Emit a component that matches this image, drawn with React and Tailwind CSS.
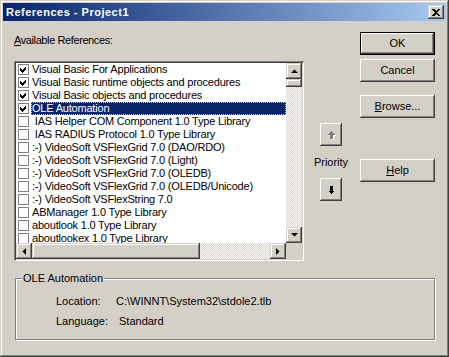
import React from 'react';

// win2000 bevels
const raised = 'shadow-[inset_-1px_-1px_#404040,inset_1px_1px_#fff,inset_-2px_-2px_#808080,inset_2px_2px_#d4d0c8]';
const raisedSb = 'shadow-[inset_-1px_-1px_#404040,inset_1px_1px_#d4d0c8,inset_-2px_-2px_#808080,inset_2px_2px_#fff]';
const sunken = 'shadow-[inset_1px_1px_#808080,inset_-1px_-1px_#fff,inset_2px_2px_#404040,inset_-2px_-2px_#d4d0c8]';
const dither = 'bg-[repeating-conic-gradient(#fff_0_25%,#d4d0c8_0_50%)] bg-[length:2px_2px]';

const refs = [
    { name: 'Visual Basic For Applications', on: true },
    { name: 'Visual Basic runtime objects and procedures', on: true },
    { name: 'Visual Basic objects and procedures', on: true },
    { name: 'OLE Automation', on: true, sel: true },
    { name: ' IAS Helper COM Component 1.0 Type Library' },
    { name: ' IAS RADIUS Protocol 1.0 Type Library' },
    { name: ':-) VideoSoft VSFlexGrid 7.0 (DAO/RDO)' },
    { name: ':-) VideoSoft VSFlexGrid 7.0 (Light)' },
    { name: ':-) VideoSoft VSFlexGrid 7.0 (OLEDB)' },
    { name: ':-) VideoSoft VSFlexGrid 7.0 (OLEDB/Unicode)' },
    { name: ':-) VideoSoft VSFlexString 7.0' },
    { name: 'ABManager 1.0 Type Library' },
    { name: 'aboutlook 1.0 Type Library' },
    { name: 'aboutlookex 1.0 Type Library' },
];

const Check = () => (
    <svg width="9" height="9" viewBox="0 0 9 9" shapeRendering="crispEdges">
        <polygon points="1,3 3,5 7,1 7,4 3,8 1,6" fill="#000" />
    </svg>
);

const Arrow = ({ dir }) => {
    const pts = {
        up: '0,4 7,4 3.5,0.5',
        down: '0,0 7,0 3.5,3.5',
        left: '4,0 4,7 0.5,3.5',
        right: '0,0 0,7 3.5,3.5',
    }[dir];
    const vertical = dir === 'up' || dir === 'down';
    return (
        <svg width={vertical ? 7 : 4} height={vertical ? 4 : 7} viewBox={vertical ? '0 0 7 4' : '0 0 4 7'}>
            <polygon points={pts} fill="#000" />
        </svg>
    );
};

const SbButton = ({ dir, className = '' }) => (
    <div className={`flex h-[16px] w-[16px] shrink-0 items-center justify-center bg-[#d4d0c8] ${raisedSb} ${className}`}>
        <Arrow dir={dir} />
    </div>
);

const Button = ({ children, isDefault }) => (
    <div className={`flex h-[23px] w-[75px] items-center justify-center bg-[#d4d0c8] ${isDefault ? 'border border-black' : ''}`}>
        <div className={`flex h-full w-full items-center justify-center ${raised}`}>{children}</div>
    </div>
);

const PriorityArrow = ({ down, disabled }) => {
    const pts = down
        ? '2,0 5,0 5,4.5 7,4.5 3.5,8 0,4.5 2,4.5'
        : '3.5,0 7,3.5 5,3.5 5,8 2,8 2,3.5 0,3.5';
    return (
        <svg width="9" height="10" viewBox="0 0 9 10" shapeRendering="crispEdges">
            {disabled && <polygon points={pts} fill="#fff" transform="translate(2,2)" />}
            <polygon points={pts} fill={disabled ? '#808080' : '#000'} transform="translate(1,1)" />
        </svg>
    );
};

const Row = ({ name, on, sel }) => (
    <div className="flex h-[13px] items-center">
        <div className="ml-[2px] flex h-[11px] w-[11px] shrink-0 items-center justify-center border border-[#808080] bg-white">
            {on && <Check />}
        </div>
        <div
            className={
                sel
                    ? 'ml-[2px] h-[13px] flex-1 whitespace-pre bg-[#0a246a] pl-[1px] leading-[13px] tracking-[-0.2px] text-white outline-1 -outline-offset-1 outline-dotted outline-[#d8c68a]'
                    : 'ml-[2px] h-[13px] whitespace-pre pl-[1px] leading-[13px] tracking-[-0.2px]'
            }
        >
            {name}
        </div>
    </div>
);

export default function App() {
    return (
        <div className="h-[357px] w-[449px] overflow-hidden bg-[#d4d0c8] font-['Liberation_Sans',Arial,sans-serif] text-[11px] text-black">
            <div className="h-full w-full p-[3px] shadow-[inset_-1px_-1px_#404040,inset_1px_1px_#d4d0c8,inset_-2px_-2px_#808080,inset_2px_2px_#fff]">
                {/* title bar */}
                <div className="flex h-[18px] items-center justify-between bg-linear-to-r from-[#0a246a] to-[#a6caf0] pl-[3px] pr-[2px]">
                    <span className="text-[11px] font-bold tracking-[0.5px] text-white">References - Project1</span>
                    <div className={`flex h-[14px] w-[16px] items-center justify-center bg-[#d4d0c8] ${raisedSb}`}>
                        <svg width="8" height="7" viewBox="0 0 8 7" shapeRendering="crispEdges">
                            <path d="M0 0h2l2 2 2-2h2L5 3.5 8 7H6L4 5 2 7H0l3-3.5z" fill="#000" />
                        </svg>
                    </div>
                </div>

                <div className="flex items-start">
                    {/* list column */}
                    <div className="ml-[11px] w-[290px]">
                        <div className="mt-[13px] h-[13px] leading-[13px] tracking-[-0.4px]">
                            <span className="underline underline-offset-[1px]">A</span>vailable References:
                        </div>
                        <div className={`mt-[14px] h-[200px] w-[290px] bg-white p-[2px] ${sunken}`}>
                            <div className="flex h-[180px]">
                                <div className="h-[180px] w-[270px] overflow-hidden bg-white">
                                    {refs.map((r) => (
                                        <Row key={r.name} {...r} />
                                    ))}
                                </div>
                                <div className="flex w-[16px] flex-col">
                                    <SbButton dir="up" />
                                    <div className={`h-[8px] w-[16px] bg-[#d4d0c8] ${raisedSb}`} />
                                    <div className={`flex-1 ${dither}`} />
                                    <SbButton dir="down" />
                                </div>
                            </div>
                            <div className="flex h-[16px]">
                                <SbButton dir="left" />
                                <div className={`h-[16px] w-[168px] bg-[#d4d0c8] ${raisedSb}`} />
                                <div className={`flex-1 ${dither}`} />
                                <SbButton dir="right" />
                                <div className="h-[16px] w-[16px] bg-[#d4d0c8]" />
                            </div>
                        </div>
                    </div>

                    {/* priority */}
                    <div className="ml-[7px] flex w-[40px] flex-col items-center">
                        <div className={`mt-[102px] flex h-[23px] w-[22px] items-center justify-center bg-[#d4d0c8] ${raised}`}>
                            <PriorityArrow disabled />
                        </div>
                        <div className="mt-[10px] h-[13px] leading-[13px]">Priority</div>
                        <div className={`mt-[9px] flex h-[23px] w-[22px] items-center justify-center bg-[#d4d0c8] ${raised}`}>
                            <PriorityArrow down />
                        </div>
                    </div>

                    {/* buttons */}
                    <div className="ml-[9px] flex w-[75px] flex-col">
                        <div className="mt-[11px]">
                            <Button isDefault>OK</Button>
                        </div>
                        <div className="mt-[4px]">
                            <Button>Cancel</Button>
                        </div>
                        <div className="mt-[13px]">
                            <Button>
                                <span className="underline underline-offset-[1px]">B</span>rowse...
                            </Button>
                        </div>
                        <div className="mt-[41px]">
                            <Button>
                                <span className="underline underline-offset-[1px]">H</span>elp
                            </Button>
                        </div>
                    </div>
                </div>

                {/* group box */}
                <div className="ml-[12px] mt-[17px] h-[62px] w-[420px] border border-[#808080] shadow-[inset_1px_1px_#fff,1px_1px_#fff]">
                    <div className="-mt-[7px] ml-[6px] block h-[13px] w-fit bg-[#d4d0c8] px-[1px] leading-[13px]">OLE Automation</div>
                    <div className="ml-[40px] mt-[10px] flex h-[13px] leading-[13px]">
                        <div className="w-[60px]">Location:</div>
                        <div>C:\WINNT\System32\stdole2.tlb</div>
                    </div>
                    <div className="ml-[40px] mt-[7px] flex h-[13px] leading-[13px]">
                        <div className="w-[63px]">Language:</div>
                        <div>Standard</div>
                    </div>
                </div>
            </div>
        </div>
    );
}
